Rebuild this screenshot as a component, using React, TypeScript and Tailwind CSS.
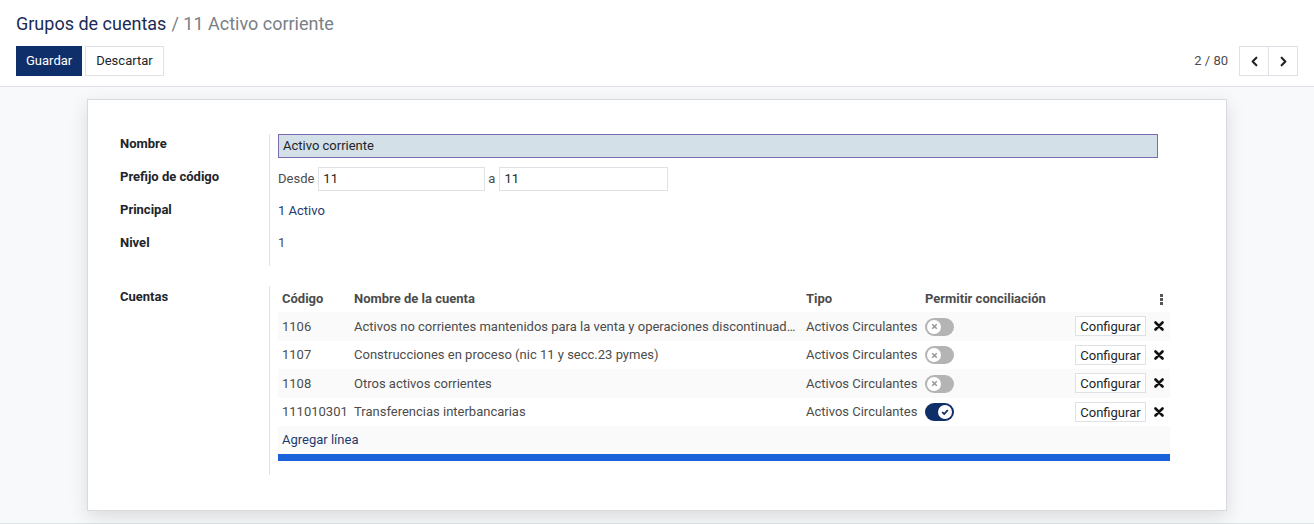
import { ChevronLeft, ChevronRight } from 'lucide-react';

const rows = [
  { code: '1106', name: 'Activos no corrientes mantenidos para la venta y operaciones discontinuadas', on: false },
  { code: '1107', name: 'Construcciones en proceso (nic 11 y secc.23 pymes)', on: false },
  { code: '1108', name: 'Otros activos corrientes', on: false },
  { code: '111010301', name: 'Transferencias interbancarias', on: true },
];

function Toggle({ on }: { on: boolean }) {
  if (on) {
    return (
      <span className="inline-flex h-[18px] w-[29px] items-center justify-end rounded-full bg-[#0f2f68] pr-[2px]">
        <span className="flex h-[14px] w-[14px] items-center justify-center rounded-full bg-white">
          <svg width="8" height="8" viewBox="0 0 8 8">
            <path d="M1.2 4.2 L3.2 6 L6.8 2" fill="none" stroke="#0f2f68" strokeWidth="1.8" />
          </svg>
        </span>
      </span>
    );
  }
  return (
    <span className="inline-flex h-[18px] w-[29px] items-center rounded-full bg-[#b4b4b4] pl-[2px]">
      <span className="flex h-[14px] w-[14px] items-center justify-center rounded-full bg-white">
        <svg width="7" height="7" viewBox="0 0 7 7">
          <path d="M1.2 1.2 L5.8 5.8 M5.8 1.2 L1.2 5.8" stroke="#9a9a9a" strokeWidth="1.6" />
        </svg>
      </span>
    </span>
  );
}

function DelIcon() {
  return (
    <svg width="10" height="10" viewBox="0 0 10 10">
      <path d="M1.5 1.5 L8.5 8.5 M8.5 1.5 L1.5 8.5" stroke="#111" strokeWidth="2.6" strokeLinecap="round" />
    </svg>
  );
}

export default function App() {
  return (
    <div className="flex h-[524px] flex-col overflow-hidden bg-[#f8f9fa] font-['Roboto',sans-serif] text-[13px] text-[#4c4c4c]">
      {/* control panel */}
      <div className="h-[87px] shrink-0 border-b border-[#dee2e6] bg-white px-4">
        <div className="flex h-[46px] items-center text-[18px]">
          <span className="text-[#1b2b55]">Grupos de cuentas</span>
          <span className="ml-[5px] text-[#7a7f86]">/ 11 Activo corriente</span>
        </div>
        <div className="flex items-center">
          <button className="h-[30px] bg-[#0f2f6b] px-[10px] text-[13px] text-white">Guardar</button>
          <button className="ml-[3px] h-[30px] border border-[#dee2e6] bg-white px-[10px] text-[13px] text-[#212529]">
            Descartar
          </button>
          <div className="ml-auto flex items-center">
            <span className="mr-[11px] text-[#4c4c4c]">2 / 80</span>
            <div className="flex h-[30px] border border-[#dee2e6]">
              <button className="flex w-[29px] items-center justify-center border-r border-[#dee2e6] text-[#212529]">
                <ChevronLeft size={15} strokeWidth={3.4} />
              </button>
              <button className="flex w-[28px] items-center justify-center text-[#212529]">
                <ChevronRight size={15} strokeWidth={3.4} />
              </button>
            </div>
          </div>
        </div>
      </div>

      {/* sheet */}
      <div className="flex-1 border-b border-[#dee2e6] pt-3">
        <div className="mx-auto w-[1140px] border border-[#d8dadd] bg-white px-[32px] pt-[34px] pb-[35px] shadow-[0_6px_18px_rgba(0,0,0,0.12)]">
          <div className="flex">
            <div className="w-[149px] font-bold text-[#212529]">
              <div className="h-[33px]">Nombre</div>
              <div className="h-[33px]">Prefijo de código</div>
              <div className="h-[33px]">Principal</div>
              <div className="h-[33px]">Nivel</div>
            </div>
            <div className="flex-1 border-l border-[#dee2e6] pl-2">
              <div className="h-[33px]">
                <div className="flex h-6 w-[880px] items-center border border-[#7c6bb0] bg-[#d3e0e8] px-1 text-[#212529]">
                  Activo corriente
                </div>
              </div>
              <div className="flex h-[33px] items-start">
                <span className="mr-1 leading-6">Desde</span>
                <div className="flex h-6 w-[167px] items-center border border-[#dee2e6] px-1 text-[#212529]">11</div>
                <span className="ml-[3px] mr-1 leading-6">a</span>
                <div className="flex h-6 w-[169px] items-center border border-[#dee2e6] px-1 text-[#212529]">11</div>
              </div>
              <div className="h-[33px] pt-[1px] text-[#1f3a6e]">1 Activo</div>
              <div className="h-[32px]">1</div>
            </div>
          </div>

          <div className="mt-[20px] flex">
            <div className="w-[149px] pt-[1px] font-bold text-[#212529]">Cuentas</div>
            <div className="flex-1 border-l border-[#dee2e6] pb-[14px] pl-2">
              <table className="w-[892px] table-fixed border-collapse whitespace-nowrap">
                <colgroup>
                  <col className="w-[72px]" />
                  <col className="w-[452px]" />
                  <col className="w-[119px]" />
                  <col className="w-[150px]" />
                  <col className="w-[78px]" />
                  <col />
                </colgroup>
                <thead>
                  <tr className="h-[26px] text-left font-bold text-[#4c4c4c]">
                    <th className="px-1">Código</th>
                    <th className="px-1">Nombre de la cuenta</th>
                    <th className="px-1">Tipo</th>
                    <th className="px-1">Permitir conciliación</th>
                    <th />
                    <th>
                      <svg width="3" height="11" viewBox="0 0 3 11" className="ml-[11px]">
                        <rect x="0" y="0" width="3" height="3" fill="#555" />
                        <rect x="0" y="4" width="3" height="3" fill="#555" />
                        <rect x="0" y="8" width="3" height="3" fill="#555" />
                      </svg>
                    </th>
                  </tr>
                </thead>
                <tbody>
                  {rows.map((r, i) => (
                    <tr key={r.code} className={i % 2 === 0 ? 'h-[28.5px] bg-[#fafafa]' : 'h-[28.5px] bg-white'}>
                      <td className="px-1">{r.code}</td>
                      <td className="truncate px-1">{r.name}</td>
                      <td className="px-1">Activos Circulantes</td>
                      <td className="px-1 align-middle">
                        <span className="flex pt-[1px]"><Toggle on={r.on} /></span>
                      </td>
                      <td className="px-1">
                        <button className="h-[20px] w-[71px] border border-[#dee2e6] bg-white text-[13px] text-[#212529]">
                          Configurar
                        </button>
                      </td>
                      <td>
                        <span className="ml-[5px] flex"><DelIcon /></span>
                      </td>
                    </tr>
                  ))}
                  <tr className="h-[28px] bg-[#fafafa]">
                    <td colSpan={6} className="px-1 text-[#1f3a6e]">Agregar línea</td>
                  </tr>
                </tbody>
              </table>
              <div className="h-[7px] w-[892px] bg-[#1a62d9]" />
            </div>
          </div>
        </div>
      </div>
    </div>
  );
}
